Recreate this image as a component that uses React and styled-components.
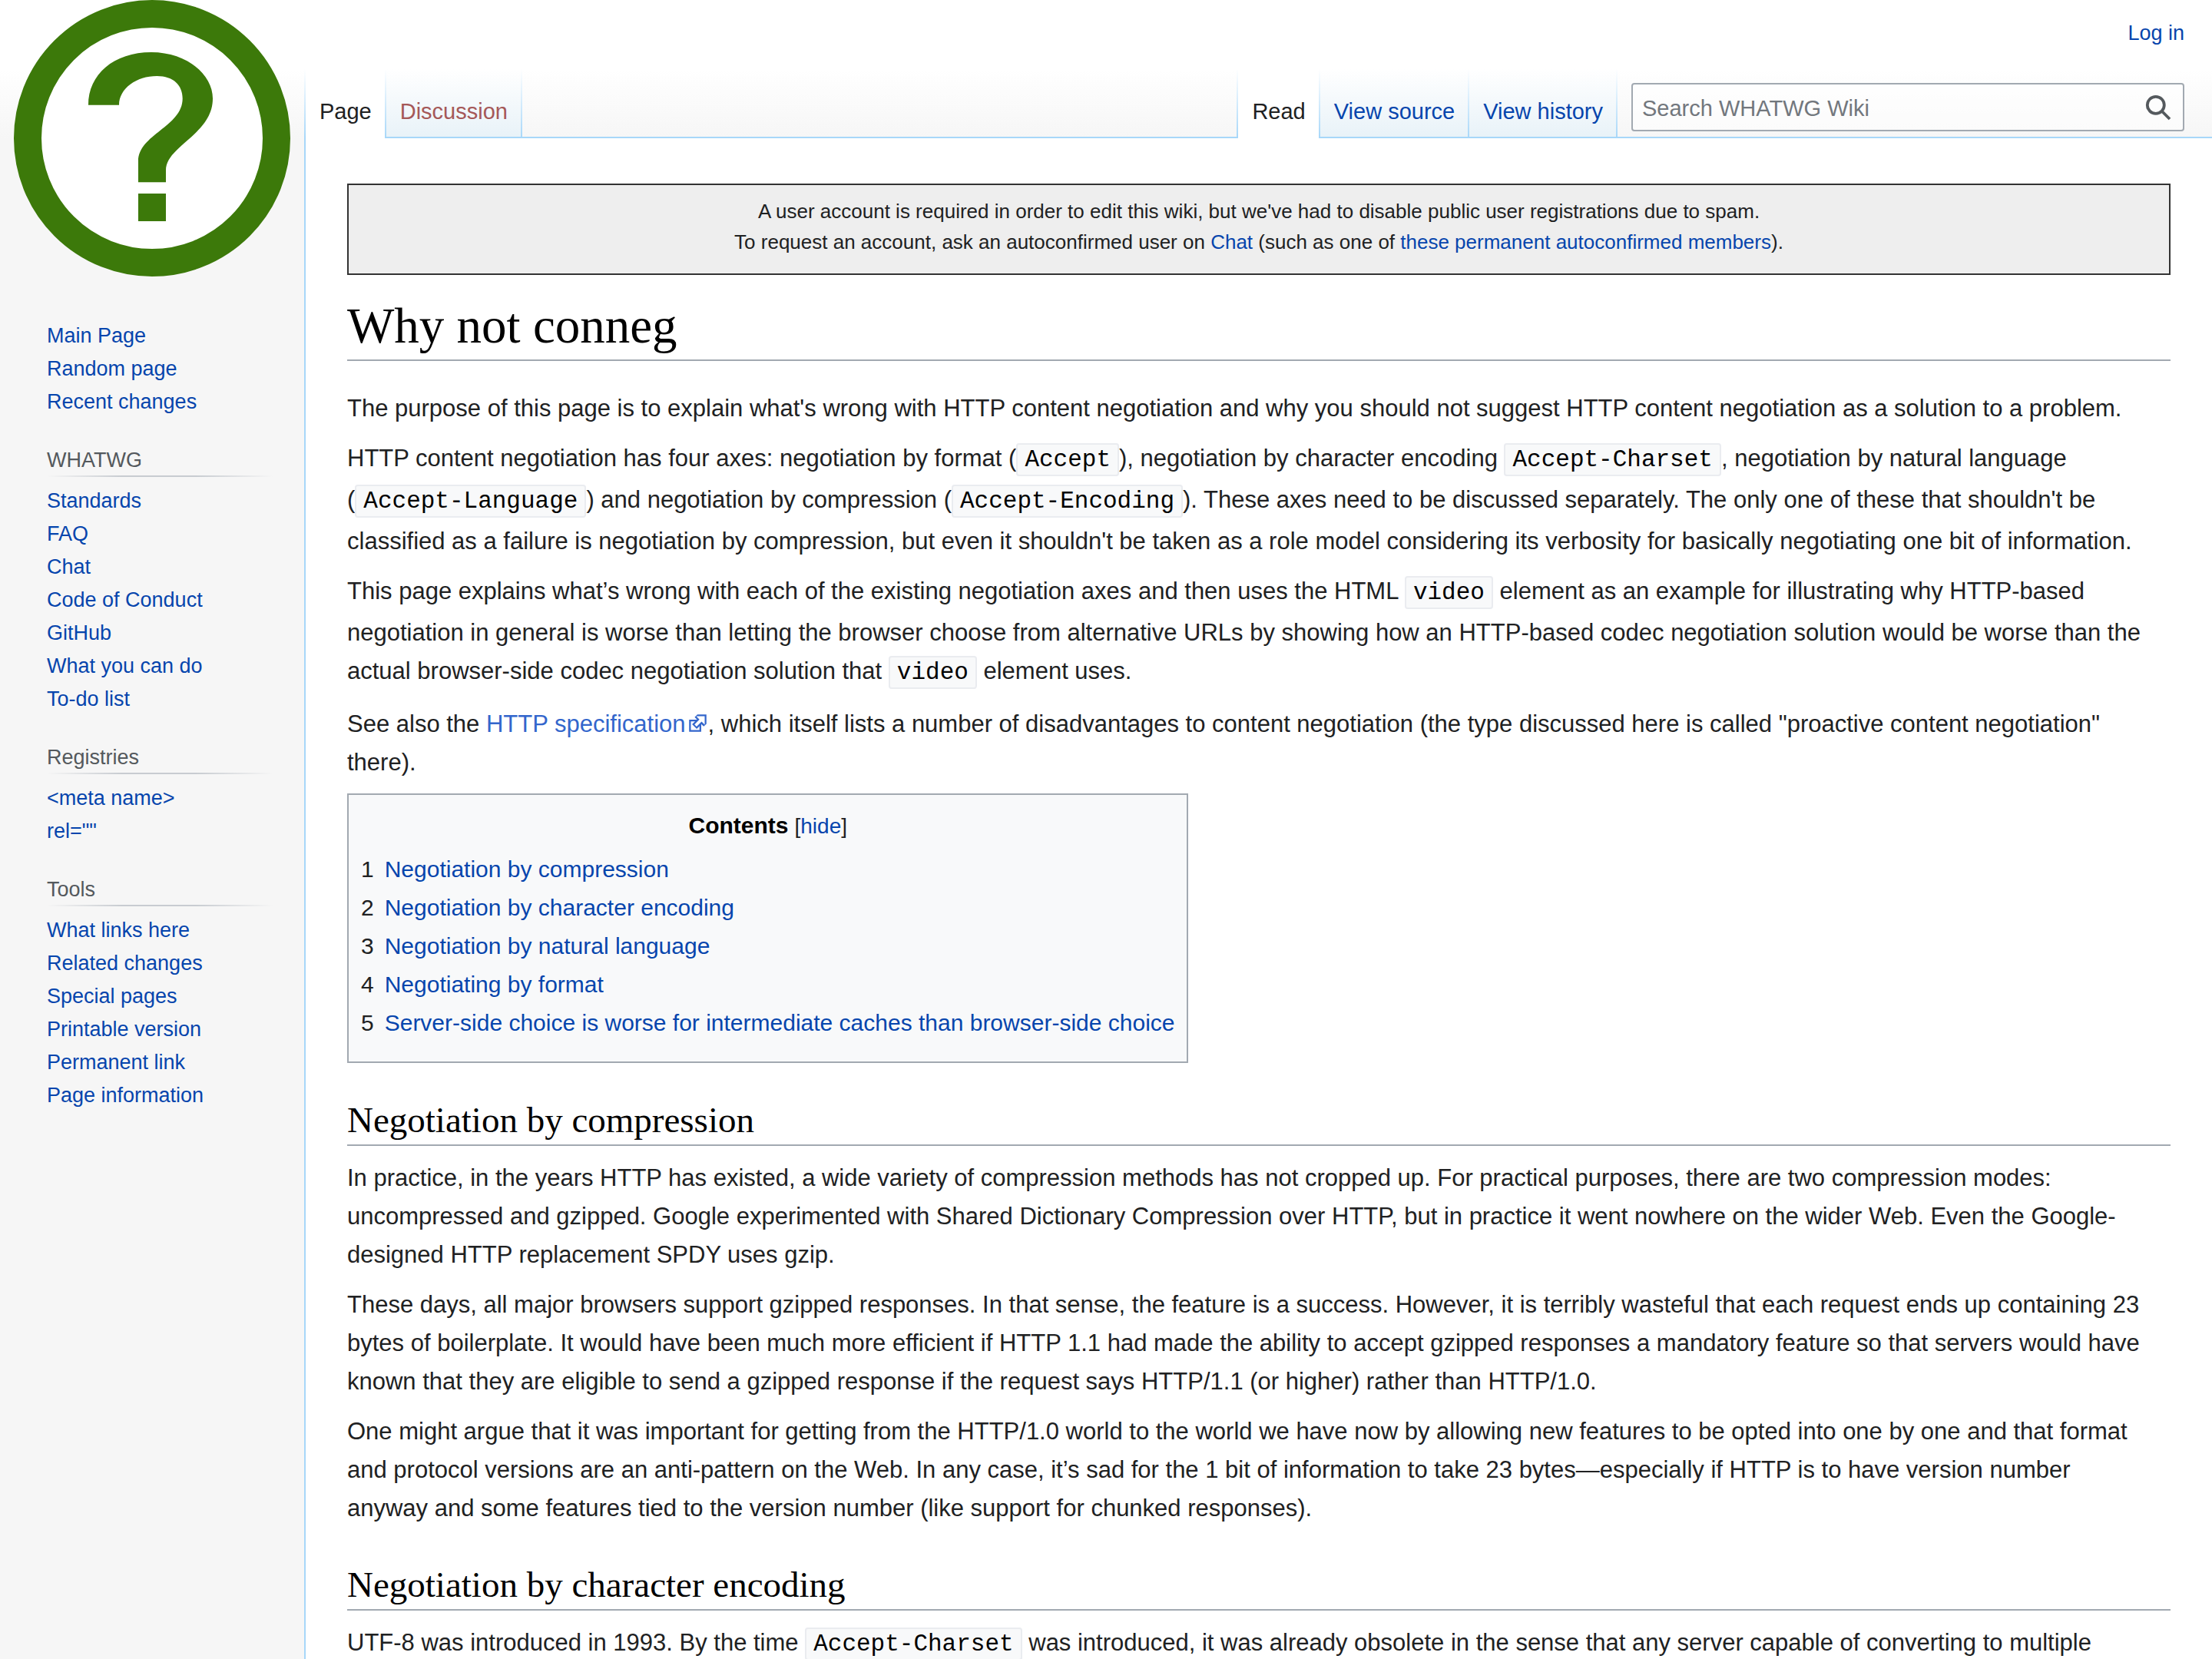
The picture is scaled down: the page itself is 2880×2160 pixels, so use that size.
import React, { useState } from "react";
import styled, { createGlobalStyle } from "styled-components";

const sans = '"Liberation Sans", Arial, sans-serif';
const serif = '"Liberation Serif", "Times New Roman", serif';
const mono = '"Liberation Mono", "Courier New", monospace';

const color = {
  text: "#202122",
  link: "#0645ad",
  external: "#3366cc",
  missing: "#a55858",
  line: "#a7d7f9",
  rule: "#a2a9b1",
  muted: "#54595d",
  panel: "#f6f6f6",
  box: "#f8f9fa",
};

const GlobalStyle = createGlobalStyle`
  *, *::before, *::after { box-sizing: border-box; }
  body {
    margin: 0;
    background: ${color.panel};
    color: ${color.text};
    font-family: ${sans};
  }
`;

const Page = styled.div`
  display: grid;
  grid-template-columns: 396px minmax(0, 1fr);
  min-height: 100vh;
  background: linear-gradient(#fff 0, #fff 90px, ${color.panel} 180px);
`;

const Link = styled.a`
  color: ${(p) => p.$color || color.link};
  text-decoration: none;
  &:hover { text-decoration: underline; }
`;

/* Sidebar */

const Sidebar = styled.aside`
  display: flex;
  flex-direction: column;
  gap: 34px;
`;

const LogoLink = styled.a`
  display: block;
  height: 360px;
  padding-left: 18px;
  margin-bottom: 22px;
`;

const Portal = styled.nav`
  padding: 0 41px 0 61px;
  font-size: 27px;
`;

const PortalTitle = styled.h3`
  margin: 0 0 10px;
  padding-bottom: 2px;
  background: linear-gradient(
      to right,
      rgba(200, 204, 209, 0),
      #c8ccd1 33%,
      #c8ccd1 66%,
      rgba(200, 204, 209, 0)
    )
    bottom / 100% 2px no-repeat;
  color: ${color.muted};
  font-size: 27px;
  font-weight: normal;
  line-height: 40px;
`;

const PortalList = styled.ul`
  margin: 0;
  padding: 0;
  list-style: none;
  line-height: 43px;
`;

/* Header */

const Main = styled.div`
  display: flex;
  flex-direction: column;
`;

const Personal = styled.div`
  display: flex;
  justify-content: flex-end;
  height: 90px;
  padding: 24px 36px 0 0;
  font-size: 27px;
  line-height: 38px;
`;

const NavRow = styled.div`
  display: flex;
  height: 90px;
  padding-right: 36px;
  background: linear-gradient(${color.line}, ${color.line}) bottom / 100% 2px no-repeat;
`;

const Tabs = styled.ul`
  display: flex;
  margin: 0;
  margin-left: ${(p) => (p.$end ? "auto" : 0)};
  padding: 0 0 0 2px;
  list-style: none;
  background: linear-gradient(#fff, ${color.line}) left / 2px 100% no-repeat;
`;

const Tab = styled.li`
  display: flex;
  align-items: center;
  padding: 20px 19px 0 18px;
  background:
    linear-gradient(#fff, ${color.line}) right / 2px 100% no-repeat,
    ${(p) =>
      p.$selected
        ? "#fff"
        : `linear-gradient(${color.line}, ${color.line}) bottom / 100% 2px no-repeat,
           linear-gradient(#fff, #e8f2f8)`};
  font-size: 29px;
  line-height: 36px;
  white-space: nowrap;
`;

const Search = styled.form`
  display: flex;
  align-items: center;
  width: 25vw;
  height: 63px;
  margin: 18px 0 0 18px;
  padding-right: 15px;
  border: 2px solid ${color.rule};
  border-radius: 4px;
  background: rgba(255, 255, 255, 0.5);
`;

const SearchInput = styled.input`
  flex: 1;
  min-width: 0;
  height: 100%;
  padding: 4px 12px 0;
  border: 0;
  outline: 0;
  background: transparent;
  color: ${color.text};
  font-family: ${sans};
  font-size: 29px;
  &::placeholder { color: #72777d; opacity: 1; }
`;

const SearchButton = styled.button`
  display: flex;
  padding: 0;
  border: 0;
  background: none;
  cursor: pointer;
`;

/* Article */

const Content = styled.main`
  flex: 1;
  padding: 59px 54px 0;
  border-left: 2px solid ${color.line};
  background: #fff;
  font-size: 31px;
  line-height: 50px;
`;

const Notice = styled.div`
  padding: 14px 18px 21px;
  border: 2px solid #333;
  background: #eee;
  font-size: 26px;
  line-height: 40px;
  text-align: center;
`;

const Title = styled.h1`
  margin: 24px 0 37px;
  padding-bottom: 2px;
  border-bottom: 2px solid ${color.rule};
  color: #000;
  font-family: ${serif};
  font-size: 65px;
  font-weight: normal;
  line-height: 84px;
`;

const Heading = styled.h2`
  margin: 44px 0 17px;
  padding-bottom: 1px;
  border-bottom: 2px solid ${color.rule};
  color: #000;
  font-family: ${serif};
  font-size: 47px;
  font-weight: normal;
  line-height: 61px;
`;

const Paragraph = styled.p`
  margin: 15px 0;
  padding-right: 22px;
`;

const Code = styled.code`
  padding: 2px 9px;
  border: 2px solid #eaecf0;
  border-radius: 4px;
  background: ${color.box};
  color: #000;
  font-family: ${mono};
  font-size: 31px;
  line-height: 54px;
`;

const ExternalIcon = styled.svg`
  width: 27px;
  height: 27px;
  margin-left: 2px;
  vertical-align: -2px;
`;

const Toc = styled.nav`
  width: fit-content;
  padding: 16px 16px 24px;
  border: 2px solid ${color.rule};
  background: ${color.box};
  font-size: 30px;
  line-height: 48px;
`;

const TocHeader = styled.div`
  display: flex;
  align-items: baseline;
  justify-content: center;
  gap: 8px;
  margin-bottom: 8px;
`;

const TocTitle = styled.h2`
  margin: 0;
  color: #000;
  font-size: 30px;
`;

const TocToggle = styled.span`
  font-size: 28px;
`;

const ToggleButton = styled.button`
  padding: 0;
  border: 0;
  background: none;
  color: ${color.link};
  font: inherit;
  cursor: pointer;
`;

const TocList = styled.ol`
  margin: 0;
  padding: 0;
  list-style: none;
`;

const TocItem = styled.li`
  display: flex;
  gap: 14px;
  margin-bottom: 2px;
`;

const portals = [
  { items: ["Main Page", "Random page", "Recent changes"] },
  {
    title: "WHATWG",
    items: ["Standards", "FAQ", "Chat", "Code of Conduct", "GitHub", "What you can do", "To-do list"],
  },
  { title: "Registries", items: ["<meta name>", 'rel=""'] },
  {
    title: "Tools",
    items: [
      "What links here",
      "Related changes",
      "Special pages",
      "Printable version",
      "Permanent link",
      "Page information",
    ],
  },
];

const sections = [
  "Negotiation by compression",
  "Negotiation by character encoding",
  "Negotiation by natural language",
  "Negotiating by format",
  "Server-side choice is worse for intermediate caches than browser-side choice",
];

function Logo() {
  return (
    <svg width="360" height="360" viewBox="0 0 360 360" aria-hidden="true">
      <circle cx="180" cy="180" r="162" fill="#fff" stroke="#3c790a" strokeWidth="36" />
      <path
        fill="#3c790a"
        d="M97 136.700C97 97 130 68 179 68C224 68 259 96 259 128.300C259 175 198 190 198 221.700V237.300H162V210C162 175 219.700 165 219.700 128.300C219.700 111 208 99 186.300 99C160 99 137 115 137 136.700Z"
      />
      <path fill="#3c790a" d="M162 252h36v36h-36z" />
    </svg>
  );
}

function Contents() {
  const [open, setOpen] = useState(true);
  return (
    <Toc aria-label="Contents">
      <TocHeader>
        <TocTitle>Contents</TocTitle>
        <TocToggle>
          [<ToggleButton type="button" onClick={() => setOpen(!open)}>{open ? "hide" : "show"}</ToggleButton>]
        </TocToggle>
      </TocHeader>
      {open && (
        <TocList>
          {sections.map((name, i) => (
            <TocItem key={name}>
              <span>{i + 1}</span>
              <Link href={`#section-${i + 1}`}>{name}</Link>
            </TocItem>
          ))}
        </TocList>
      )}
    </Toc>
  );
}

export default function App() {
  return (
    <>
      <GlobalStyle />
      <Page>
        <Sidebar>
          <LogoLink href="#main" aria-label="Main Page">
            <Logo />
          </LogoLink>
          {portals.map(({ title, items }) => (
            <Portal key={title || "main"} aria-label={title || "Navigation"}>
              {title && <PortalTitle>{title}</PortalTitle>}
              <PortalList>
                {items.map((item) => (
                  <li key={item}>
                    <Link href="#nav">{item}</Link>
                  </li>
                ))}
              </PortalList>
            </Portal>
          ))}
        </Sidebar>

        <Main>
          <Personal>
            <Link href="#login">Log in</Link>
          </Personal>
          <NavRow>
            <Tabs>
              <Tab $selected><Link href="#page" $color={color.text}>Page</Link></Tab>
              <Tab><Link href="#talk" $color={color.missing}>Discussion</Link></Tab>
            </Tabs>
            <Tabs $end>
              <Tab $selected><Link href="#read" $color={color.text}>Read</Link></Tab>
              <Tab><Link href="#source">View source</Link></Tab>
              <Tab><Link href="#history">View history</Link></Tab>
            </Tabs>
            <Search role="search" onSubmit={(e) => e.preventDefault()}>
              <SearchInput type="search" placeholder="Search WHATWG Wiki" aria-label="Search WHATWG Wiki" />
              <SearchButton type="submit" aria-label="Go">
                <svg width="34" height="34" viewBox="0 0 34 34" fill="none" stroke={color.muted} strokeWidth="3.8">
                  <circle cx="13.8" cy="13.8" r="11" />
                  <path d="M21.500 21.500L32 32" />
                </svg>
              </SearchButton>
            </Search>
          </NavRow>

          <Content>
            <Notice>
              A user account is required in order to edit this wiki, but we've had to disable public user
              registrations due to spam.
              <br />
              To request an account, ask an autoconfirmed user on <Link href="#chat">Chat</Link> (such as one of{" "}
              <Link href="#members">these permanent autoconfirmed members</Link>).
            </Notice>

            <Title>Why not conneg</Title>

            <Paragraph>
              The purpose of this page is to explain what's wrong with HTTP content negotiation and why you should
              not suggest HTTP content negotiation as a solution to a problem.
            </Paragraph>
            <Paragraph>
              HTTP content negotiation has four axes: negotiation by format (<Code>Accept</Code>), negotiation by
              character encoding <Code>Accept-Charset</Code>, negotiation by natural language (
              <Code>Accept-Language</Code>) and negotiation by compression (<Code>Accept-Encoding</Code>). These
              axes need to be discussed separately. The only one of these that shouldn't be classified as a failure
              is negotiation by compression, but even it shouldn't be taken as a role model considering its
              verbosity for basically negotiating one bit of information.
            </Paragraph>
            <Paragraph>
              This page explains what’s wrong with each of the existing negotiation axes and then uses the HTML{" "}
              <Code>video</Code> element as an example for illustrating why HTTP-based negotiation in general is
              worse than letting the browser choose from alternative URLs by showing how an HTTP-based codec
              negotiation solution would be worse than the actual browser-side codec negotiation solution that{" "}
              <Code>video</Code> element uses.
            </Paragraph>
            <Paragraph>
              See also the{" "}
              <Link href="#spec" $color={color.external}>
                HTTP specification
                <ExternalIcon viewBox="0 0 12 12" aria-hidden="true">
                  <path fill="#fff" stroke="#36c" d="M1.5 4.518h5.982V10.5H1.5z" />
                  <path fill="#36c" d="M5.765 1H11v5.39L9.427 7.937l-1.31-1.31L5.393 9.35l-2.69-2.688 2.81-2.808L4.2 2.544z" />
                  <path fill="#fff" d="m9.995 2.004.022 4.885L8.2 5.07 5.32 7.95 4.09 6.723l2.882-2.88-1.85-1.852z" />
                </ExternalIcon>
              </Link>
              , which itself lists a number of disadvantages to content negotiation (the type discussed here is
              called "proactive content negotiation" there).
            </Paragraph>

            <Contents />

            <Heading id="section-1">Negotiation by compression</Heading>
            <Paragraph>
              In practice, in the years HTTP has existed, a wide variety of compression methods has not cropped up.
              For practical purposes, there are two compression modes: uncompressed and gzipped. Google
              experimented with Shared Dictionary Compression over HTTP, but in practice it went nowhere on the
              wider Web. Even the Google-designed HTTP replacement SPDY uses gzip.
            </Paragraph>
            <Paragraph>
              These days, all major browsers support gzipped responses. In that sense, the feature is a success.
              However, it is terribly wasteful that each request ends up containing 23 bytes of boilerplate. It
              would have been much more efficient if HTTP 1.1 had made the ability to accept gzipped responses a
              mandatory feature so that servers would have known that they are eligible to send a gzipped response
              if the request says HTTP/1.1 (or higher) rather than HTTP/1.0.
            </Paragraph>
            <Paragraph>
              One might argue that it was important for getting from the HTTP/1.0 world to the world we have now by
              allowing new features to be opted into one by one and that format and protocol versions are an
              anti-pattern on the Web. In any case, it’s sad for the 1 bit of information to take 23
              bytes—especially if HTTP is to have version number anyway and some features tied to the version
              number (like support for chunked responses).
            </Paragraph>

            <Heading id="section-2">Negotiation by character encoding</Heading>
            <Paragraph>
              UTF-8 was introduced in 1993. By the time <Code>Accept-Charset</Code> was introduced, it was already
              obsolete in the sense that any server capable of converting to multiple
            </Paragraph>
          </Content>
        </Main>
      </Page>
    </>
  );
}
